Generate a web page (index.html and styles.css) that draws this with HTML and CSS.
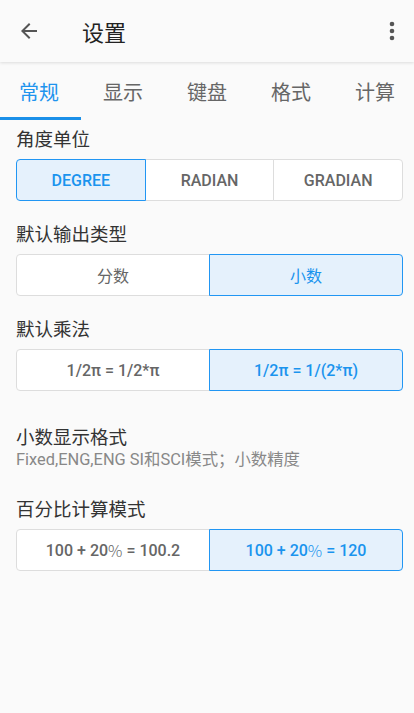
FILE: index.html
```html
<!DOCTYPE html>
<html>
<head>
<meta charset="utf-8">
<title>设置</title>
<link rel="stylesheet" href="styles.css">
</head>
<body>
<div id="app-bar">
<button class="icon-btn back-btn" aria-label="返回">
<svg width="24" height="24" viewBox="0 0 24 24"><path d="M20 11H7.83l5.59-5.59L12 4l-8 8 8 8 1.41-1.41L7.83 13H20v-2z" fill="#555"/></svg>
</button>
<div class="title">设置</div>
<button class="icon-btn menu-btn" aria-label="更多">
<svg width="24" height="28" viewBox="0 0 24 28"><circle cx="12" cy="7" r="2.3" fill="#555"/><circle cx="12" cy="14" r="2.3" fill="#555"/><circle cx="12" cy="21" r="2.3" fill="#555"/></svg>
</button>
</div>
<div id="tab-bar">
<div class="tabs">
<div class="tab active">常规</div>
<div class="tab">显示</div>
<div class="tab">键盘</div>
<div class="tab">格式</div>
<div class="tab">计算</div>
</div>
</div>
<div id="settings">
<div class="section">
<div class="label">角度单位</div>
<div class="segments">
<div class="seg selected">DEGREE</div>
<div class="seg">RADIAN</div>
<div class="seg">GRADIAN</div>
</div>
</div>
<div class="section">
<div class="label">默认输出类型</div>
<div class="segments">
<div class="seg cjk">分数</div>
<div class="seg cjk selected">小数</div>
</div>
</div>
<div class="section">
<div class="label">默认乘法</div>
<div class="segments">
<div class="seg">1/2π = 1/2*π</div>
<div class="seg selected">1/2π = 1/(2*π)</div>
</div>
</div>
<div class="section pref">
<div class="label">小数显示格式</div>
<div class="summary">Fixed,ENG,ENG SI和SCI模式；小数精度</div>
</div>
<div class="section pct">
<div class="label">百分比计算模式</div>
<div class="segments">
<div class="seg">100 + 20<span class="pct-sign">%</span> = 100.2</div>
<div class="seg selected">100 + 20<span class="pct-sign">%</span> = 120</div>
</div>
</div>
</div>
</body>
</html>
```
FILE: styles.css
```css
body {
    margin: 0;
    background-color: #fafafa;
    font-family: Roboto, "Noto Sans CJK SC", sans-serif;
    color: #333;
}
#app-bar {
    height: 62px;
    display: flex;
    align-items: center;
    background-color: #fafafa;
    box-shadow: 0 1px 3px rgba(0, 0, 0, 0.12);
    position: relative;
}
.icon-btn {
    border: none;
    background: none;
    padding: 0;
    display: flex;
    align-items: center;
    justify-content: center;
}
.back-btn {
    margin-left: 17px;
    width: 24px;
    height: 24px;
}
.title {
    margin-left: 41px;
    font-size: 22px;
    color: #222;
    flex: 1;
}
.menu-btn {
    margin-right: 10px;
}
#tab-bar {
    height: 58px;
    overflow: hidden;
}
.tabs {
    display: flex;
    height: 100%;
    margin-left: -3px;
}
.tab {
    flex: none;
    width: 84px;
    box-sizing: border-box;
    display: flex;
    align-items: center;
    justify-content: center;
    font-size: 20px;
    color: #666;
    border-bottom: 3px solid transparent;
    padding-top: 3px;
}
.tab.active {
    color: #1e94ee;
    border-bottom-color: #1a8fe8;
}
#settings {
    padding: 6px 11px 0 16px;
}
.section {
    margin-top: 20px;
}
.section:first-child {
    margin-top: 0;
}
.label {
    font-size: 18.5px;
    line-height: 28px;
    color: #333;
}
.segments {
    display: flex;
    margin-top: 5px;
    height: 42px;
}
.seg {
    flex: 1;
    box-sizing: border-box;
    display: flex;
    align-items: center;
    justify-content: center;
    font-size: 16px;
    font-weight: 500;
    color: #666;
    background-color: #fff;
    border: 1px solid #ddd;
    margin-left: -1px;
    white-space: pre;
}
.seg:first-child {
    margin-left: 0;
    border-radius: 4px 0 0 4px;
}
.seg:last-child {
    border-radius: 0 4px 4px 0;
}
.seg.cjk {
    font-weight: normal;
}
.seg.selected {
    color: #1a94ee;
    background-color: #e5f1fc;
    border-color: #2196f3;
    position: relative;
    z-index: 1;
}
.pct-sign {
    font-family: "Noto Sans CJK SC", sans-serif;
    font-weight: 300;
}
.section.pref {
    margin-top: 33px;
}
.summary {
    font-size: 16.4px;
    line-height: 20px;
    color: #888;
    margin-top: -2px;
}
.section.pct {
    margin-top: 26px;
}
```
